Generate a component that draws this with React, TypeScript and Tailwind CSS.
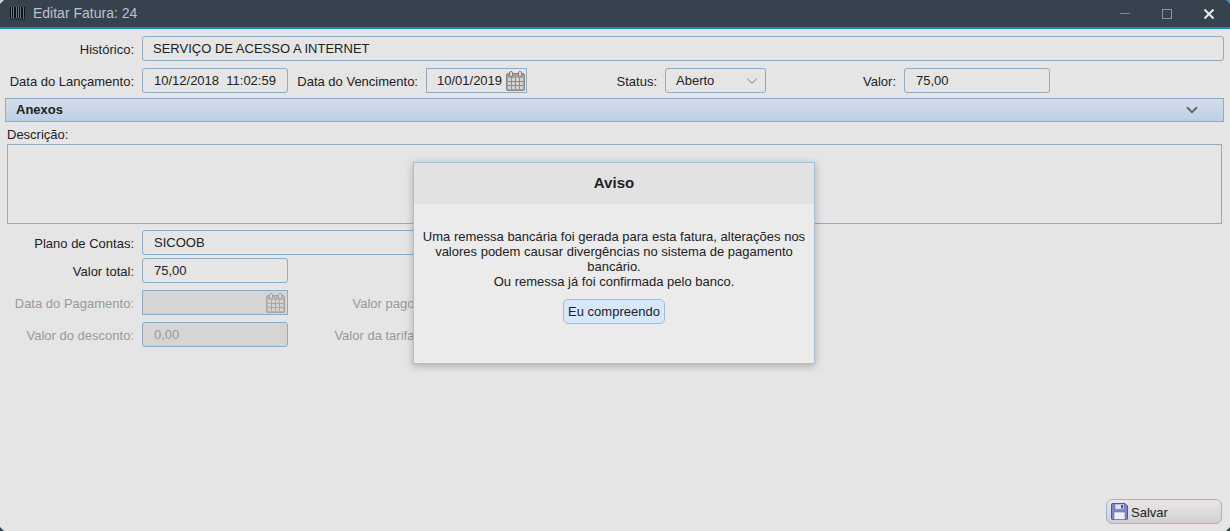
import React from "react";
import { ChevronDown } from "lucide-react";

const inputBase = "h-[25px] rounded-[3px] border border-[#8faac4] flex items-center text-[13px]";

const BarcodeIcon = () => (
  <svg width="15" height="13" viewBox="0 0 15 13" className="shrink-0">
    <rect width="15" height="11" fill="#6f7880" />
    <g fill="#0f1418">
      <rect x="0" y="0" width="1" height="11" />
      <rect x="2" y="0" width="1" height="11" />
      <rect x="4" y="0" width="2" height="11" />
      <rect x="7" y="0" width="1" height="11" />
      <rect x="9" y="0" width="1" height="11" />
      <rect x="11" y="0" width="2" height="11" />
      <rect x="14" y="0" width="1" height="11" />
    </g>
    <path d="M0 12.500H15" stroke="#0f1418" strokeDasharray="1 1" />
  </svg>
);

const CalendarIcon = ({ faded }: { faded?: boolean }) => (
  <svg width="19" height="20" viewBox="0 0 19 20" className={faded ? "opacity-60" : ""}>
    <rect x="0.5" y="2.5" width="18" height="17" rx="1.5" fill="#a5a19c" stroke="#8b8784" />
    <rect x="2" y="7" width="15" height="11" fill="#d4d2cf" />
    <g stroke="#8f8b87" strokeWidth="1">
      <path d="M2 10.5H17M2 14.5H17M5.5 7V18M9.5 7V18M13.5 7V18" />
    </g>
    <rect x="3.5" y="0.5" width="3" height="5" rx="1.5" fill="#e5e5e5" stroke="#7f7b78" />
    <rect x="12.5" y="0.5" width="3" height="5" rx="1.5" fill="#e5e5e5" stroke="#7f7b78" />
  </svg>
);

const FloppyIcon = () => (
  <svg width="17" height="17" viewBox="0 0 17 17">
    <path d="M0.5 1.5a1 1 0 0 1 1-1H14l2.5 2.5v12.500a1 1 0 0 1-1 1h-14a1 1 0 0 1-1-1z" fill="#7f86cf" stroke="#4d5299" />
    <rect x="4" y="1" width="9" height="5.500" fill="#dfe2f3" stroke="#5f65ad" strokeWidth="0.5" />
    <rect x="10" y="2" width="2" height="3.500" fill="#4d5299" />
    <rect x="3" y="9" width="11" height="7.500" fill="#eceef8" stroke="#5f65ad" strokeWidth="0.5" />
  </svg>
);

const Corner = ({ className, d, fill }: { className: string; d: string; fill: string }) => (
  <svg width="5" height="5" viewBox="0 0 5 5" className={`absolute ${className}`}>
    <path d={d} fill={fill} />
  </svg>
);

const Label = ({ children, width, muted }: { children: React.ReactNode; width: string; muted?: boolean }) => (
  <span className={`${width} shrink-0 pt-[3px] text-right text-[13px] whitespace-nowrap ${muted ? "text-[#999999]" : "text-[#222222]"}`}>
    {children}
  </span>
);

export default function App() {
  return (
    <div
      className="relative flex h-[531px] w-[1230px] flex-col overflow-hidden bg-[#e5e5e5] text-[#222222]"
      style={{ fontFamily: '"Liberation Sans", Arial, sans-serif' }}
    >
      {/* Title bar */}
      <div className="flex h-[29px] shrink-0 items-center border-b-2 border-[#1b8fa8] bg-[#36424e] pl-[10px]">
        <BarcodeIcon />
        <span className="ml-[8px] text-[14px] text-[#bcc2c8]">Editar Fatura: 24</span>
        <div className="ml-auto flex items-center pr-[16px]">
          <div className="mr-[32px] h-px w-[10px] bg-[#7f8890]" />
          <div className="mr-[32px] h-[10px] w-[10px] border border-[#8c949b]" />
          <svg width="10" height="10" viewBox="0 0 10 10">
            <path d="M0.500 0.500L9.500 9.500M9.500 0.500L0.500 9.500" stroke="#e6e8ea" strokeWidth="2" />
          </svg>
        </div>
      </div>

      {/* Form */}
      <div className="flex min-h-0 flex-1 flex-col pt-[7px]">
        <div className="flex items-center gap-[8px]">
          <Label width="w-[134px]">Histórico:</Label>
          <div className={`${inputBase} w-[1082px] pl-[10px]`}>SERVIÇO DE ACESSO A INTERNET</div>
        </div>

        <div className="mt-[7px] flex items-center">
          <Label width="w-[134px]">Data do Lançamento:</Label>
          <div className={`${inputBase} ml-[8px] w-[146px] whitespace-pre pl-[11px]`}>10/12/2018  11:02:59</div>
          <Label width="w-[130px]">Data do Vencimento:</Label>
          <div className={`${inputBase} ml-[8px] w-[101px] justify-between rounded-none pl-[10px] pr-[1px]`}>
            10/01/2019
            <CalendarIcon />
          </div>
          <Label width="w-[130px]">Status:</Label>
          <div className={`${inputBase} ml-[8px] w-[101px] justify-between pl-[10px] pr-[4px]`}>
            Aberto
            <ChevronDown size={18} strokeWidth={1.25} className="text-[#777777]" />
          </div>
          <Label width="w-[130px]">Valor:</Label>
          <div className={`${inputBase} ml-[8px] w-[146px] pl-[11px]`}>75,00</div>
        </div>

        <div className="mx-[5px] mt-[5px] flex h-[24px] w-[1219px] items-center justify-between border border-[#8faac4] bg-gradient-to-b from-[#d3deeb] to-[#bccfe5] pl-[10px] pr-[22px]">
          <span className="text-[13px] font-bold text-[#222222]">Anexos</span>
          <ChevronDown size={18} strokeWidth={2.5} className="text-[#666666]" />
        </div>

        <div className="ml-[7px] mt-[6px] text-[13px] leading-[14px]">Descrição:</div>
        <div className="ml-[7px] mt-[2px] h-[80px] w-[1215px] border border-[#8faac4]" />

        <div className="mt-[6px] flex items-center gap-[8px]">
          <Label width="w-[134px]">Plano de Contas:</Label>
          <div className={`${inputBase} w-[400px] pl-[11px]`}>SICOOB</div>
        </div>

        <div className="mt-[3px] flex items-center gap-[8px]">
          <Label width="w-[134px]">Valor total:</Label>
          <div className={`${inputBase} w-[146px] pl-[11px]`}>75,00</div>
        </div>

        <div className="mt-[7px] flex items-center">
          <Label width="w-[134px]" muted>Data do Pagamento:</Label>
          <div className={`${inputBase} ml-[8px] w-[146px] justify-end rounded-none bg-[#d5d5d5] pr-[2px]`}>
            <CalendarIcon faded />
          </div>
          <Label width="w-[130px]" muted>Valor pago:</Label>
        </div>

        <div className="mt-[7px] flex items-center">
          <Label width="w-[134px]" muted>Valor do desconto:</Label>
          <div className={`${inputBase} ml-[8px] w-[146px] bg-[#d5d5d5] pl-[11px] text-[#999999]`}>0,00</div>
          <Label width="w-[130px]" muted>Valor da tarifa:</Label>
        </div>

        <div className="mb-[7px] mr-[8px] mt-auto flex justify-end">
          <div className="flex h-[25px] w-[116px] items-center gap-[3px] rounded-[6px] border border-[#9db3c9] bg-gradient-to-b from-[#e8e8e8] to-[#d0d0d0] pl-[4px] text-[13px]">
            <FloppyIcon />
            <span className="pt-[2px]">Salvar</span>
          </div>
        </div>
      </div>

      {/* Dialog */}
      <div className="absolute left-[413px] top-[162px] flex h-[202px] w-[402px] flex-col border border-[#a5c0d8] bg-[#ebebeb] shadow-[0_2px_8px_rgba(0,0,0,0.25)]">
        <div className="flex h-[41px] shrink-0 items-center justify-center bg-[#e2e2e2] text-[15px] font-bold text-[#222222]">
          Aviso
        </div>
        <div className="flex flex-col items-center px-[8px] pt-[25px] text-center text-[13px] leading-[15px]">
          <p>
            Uma remessa bancária foi gerada para esta fatura, alterações nos valores podem causar divergências no sistema de pagamento bancário.
            <br />
            Ou remessa já foi confirmada pelo banco.
          </p>
          <div className="mt-[10px] flex h-[25px] w-[102px] items-center justify-center rounded-[5px] border border-[#a5bcd2] bg-[#d8e8fc]">
            Eu compreendo
          </div>
        </div>
      </div>

      {/* Window corners */}
      <Corner className="left-0 top-0" d="M0 0H4L0 4Z" fill="#cfd3d6" />
      <Corner className="right-0 top-0" d="M1 0H5V4Z" fill="#3f8fb0" />
      <Corner className="bottom-0 left-0" d="M0 1L4 5H0Z" fill="#36424e" />
      <Corner className="bottom-0 right-0" d="M5 1V5H1Z" fill="#36424e" />
    </div>
  );
}
